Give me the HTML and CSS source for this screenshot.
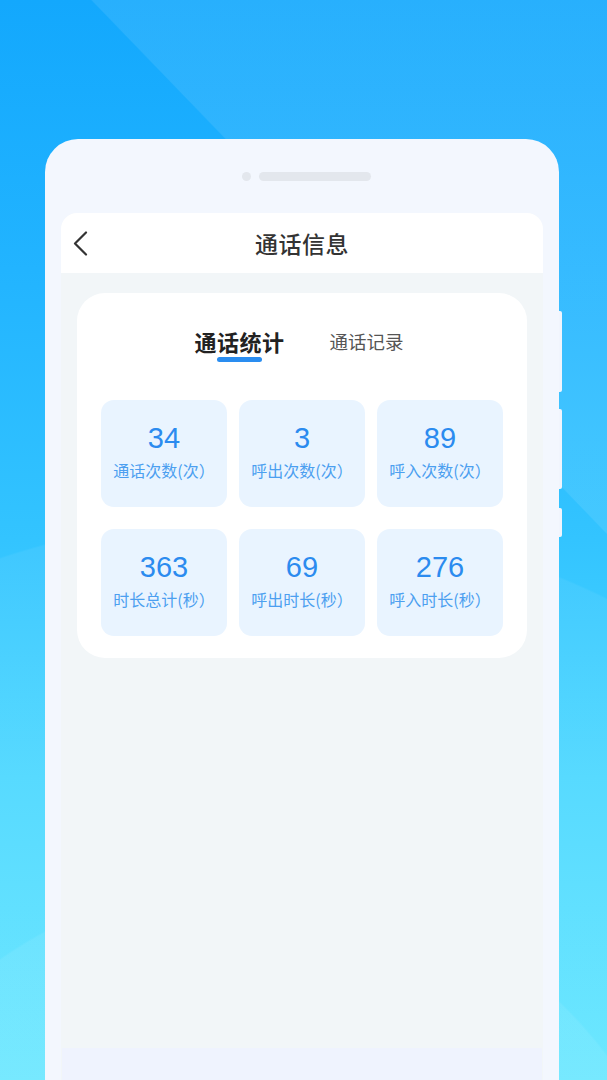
FILE: index.html
```html
<!DOCTYPE html>
<html lang="zh-CN">
<head>
<meta charset="utf-8">
<title>通话信息</title>
<link rel="stylesheet" href="styles.css">
</head>
<body>
<div class="page">
  <div class="phone">
    <span class="side-btn side-btn-1"></span>
    <span class="side-btn side-btn-2"></span>
    <span class="side-btn side-btn-3"></span>
    <div class="speaker">
      <span class="speaker-dot"></span>
      <span class="speaker-bar"></span>
    </div>
    <div class="screen">
      <div class="nav">
        <svg class="back" width="16" height="25" viewBox="0 0 16 25" aria-hidden="true">
          <path d="M14 1.5 L3 12.5 L14 23.5" fill="none" stroke="#333" stroke-width="2.2" stroke-linecap="round" stroke-linejoin="round"/>
        </svg>
        <div class="nav-title">通话信息</div>
      </div>
      <div class="content">
        <div class="stats-card">
          <div class="tabs">
            <div class="tab tab-active">通话统计<span class="tab-line"></span></div>
            <div class="tab">通话记录</div>
          </div>
          <div class="grid">
            <div class="cell"><div class="num">34</div><div class="label">通话次数(次）</div></div>
            <div class="cell"><div class="num">3</div><div class="label">呼出次数(次）</div></div>
            <div class="cell"><div class="num">89</div><div class="label">呼入次数(次）</div></div>
            <div class="cell"><div class="num">363</div><div class="label">时长总计(秒）</div></div>
            <div class="cell"><div class="num">69</div><div class="label">呼出时长(秒）</div></div>
            <div class="cell"><div class="num">276</div><div class="label">呼入时长(秒）</div></div>
          </div>
        </div>
      </div>
      <div class="bottom-bar"></div>
    </div>
  </div>
</div>
</body>
</html>
```

FILE: styles.css
```css
* { box-sizing: border-box; }
html, body { margin: 0; padding: 0; }
body {
  width: 607px;
  height: 1080px;
  overflow: hidden;
  font-family: "Noto Sans CJK SC", "Noto Sans", sans-serif;
  background:
    radial-gradient(circle at 254px 1320px, rgba(255,255,255,0.07) 440px, rgba(255,255,255,0) 442px),
    radial-gradient(circle at 254px 1320px, rgba(255,255,255,0.06) 802px, rgba(255,255,255,0) 804px),
    linear-gradient(46deg, rgba(255,255,255,0) 68.7%, rgba(255,255,255,0.09) 68.8%),
    linear-gradient(180deg, #13a8fd 0%, #22b4ff 25%, #33c4ff 50%, #4dd8ff 72%, #64e6ff 100%);
}
.page {
  display: flex;
  justify-content: flex-start;
  padding-top: 139px;
  padding-left: 45px;
}
.phone {
  position: relative;
  width: 514px;
  height: 941px;
  background: #f3f7fe;
  border-radius: 33px 33px 0 0;
  padding: 33px 16px 0;
  display: flex;
  flex-direction: column;
}
.side-btn {
  position: absolute;
  right: -3px;
  width: 3px;
  background: #f1f5fd;
  border-radius: 0 2px 2px 0;
}
.side-btn-1 { top: 172px; height: 81px; }
.side-btn-2 { top: 270px; height: 80px; }
.side-btn-3 { top: 369px; height: 29px; }
.speaker {
  display: flex;
  justify-content: center;
  align-items: center;
  gap: 8px;
  padding-left: 8px;
  height: 9px;
}
.speaker-dot {
  width: 9px;
  height: 9px;
  border-radius: 50%;
  background: #e3e7ed;
}
.speaker-bar {
  width: 112px;
  height: 9px;
  border-radius: 5px;
  background: #e3e7ed;
}
.screen {
  margin-top: 32px;
  flex: 1;
  display: flex;
  flex-direction: column;
  background: #f2f6f8;
  border-radius: 16px 16px 0 0;
}
.nav {
  position: relative;
  height: 60px;
  background: #ffffff;
  border-radius: 16px 16px 0 0;
  display: flex;
  align-items: center;
  justify-content: center;
}
.back {
  position: absolute;
  left: 11px;
  top: 18px;
}
.nav-title {
  font-size: 23px;
  font-weight: 500;
  color: #333333;
  letter-spacing: 0.5px;
}
.content {
  flex: 1;
  padding: 20px 16px 0;
}
.stats-card {
  background: #ffffff;
  border-radius: 28px;
  padding: 28px 24px 22px;
}
.tabs {
  display: flex;
  justify-content: center;
  align-items: flex-start;
  gap: 45px;
  height: 79px;
  padding-right: 6px;
}
.tab {
  position: relative;
  font-size: 18.5px;
  line-height: 40px;
  color: #555555;
}
.tab-active {
  font-size: 22px;
  font-weight: 700;
  color: #222222;
  letter-spacing: 0.5px;
}
.tab-line {
  position: absolute;
  left: 50%;
  margin-left: -22px;
  top: 36px;
  width: 45px;
  height: 5px;
  border-radius: 3px;
  background: #2a8df0;
}
.grid {
  display: grid;
  grid-template-columns: repeat(3, 126px);
  column-gap: 12px;
  row-gap: 22px;
}
.cell {
  height: 107px;
  border-radius: 13px;
  background: #e9f4ff;
  display: flex;
  flex-direction: column;
  align-items: center;
  justify-content: center;
  gap: 3px;
  padding-bottom: 6px;
}
.num {
  font-family: "Liberation Sans", "Noto Sans", sans-serif;
  font-size: 29px;
  line-height: 36px;
  color: #2b8bef;
}
.label {
  font-size: 16px;
  line-height: 22px;
  color: #4c9ff0;
}
.bottom-bar {
  height: 32px;
  margin: 0 1px;
  background: #eff3fe;
}
```
